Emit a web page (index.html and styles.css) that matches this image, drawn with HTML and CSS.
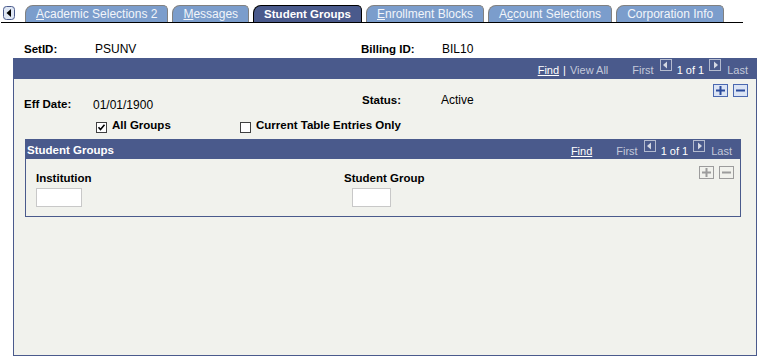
FILE: index.html
```html
<!DOCTYPE html>
<html lang="en">
  <head>
    <meta charset="UTF-8" />
    <title>Student Groups</title>
    <link rel="stylesheet" href="styles.css">
  </head>
  <body>
    <div class="tabs">
      <span class="tab-scroll">
        <svg width="12" height="14" viewBox="0 0 12 14">
          <rect x="0.5" y="0.5" width="11" height="13" rx="3" fill="#dfe7f4" stroke="#4a5a8c" />
          <polygon points="3.5,7 8,3 8,11" fill="#000" />
        </svg>
      </span>
      <a class="tab"><u>A</u>cademic Selections 2</a>
      <a class="tab"><u>M</u>essages</a>
      <a class="tab active">Student Groups</a>
      <a class="tab"><u>E</u>nrollment Blocks</a>
      <a class="tab">A<u>c</u>count Selections</a>
      <a class="tab">Corporation Info</a>
    </div>

    <div class="keys">
      <span class="label">SetID:</span>
      <span>PSUNV</span>
      <span class="label">Billing ID:</span>
      <span>BIL10</span>
    </div>

    <div class="scroll">
      <div class="bar">
        <a class="txt">Find</a>
        <span class="txt sep">|</span>
        <span class="txt">View All</span>
        <span class="txt gap">First</span>
        <svg class="arrow prev" width="12" height="12" viewBox="0 0 12 12">
          <rect x="0.5" y="0.5" width="11" height="11" fill="none" stroke="#b4bbcf" />
          <polygon points="3,6 7,2.5 7,9.5" fill="#d4d8e3" />
        </svg>
        <span class="txt count">1 of 1</span>
        <svg class="arrow next" width="12" height="12" viewBox="0 0 12 12">
          <rect x="0.5" y="0.5" width="11" height="11" fill="none" stroke="#b4bbcf" />
          <polygon points="9,6 5,2.5 5,9.5" fill="#d4d8e3" />
        </svg>
        <span class="txt">Last</span>
      </div>

      <div class="tools">
        <svg width="15" height="13" viewBox="0 0 15 13">
          <rect x="0.5" y="0.5" width="14" height="12" fill="#dbe4f4" stroke="#4a68b0" />
          <rect x="3" y="5.5" width="9" height="2" fill="#2a4b9c" />
          <rect x="6.5" y="2" width="2" height="9" fill="#2a4b9c" />
        </svg>
        <svg width="15" height="13" viewBox="0 0 15 13">
          <rect x="0.5" y="0.5" width="14" height="12" fill="#dbe4f4" stroke="#4a68b0" />
          <rect x="3" y="5.5" width="9" height="2" fill="#2a4b9c" />
        </svg>
      </div>

      <div class="fields">
        <span class="label low">Eff Date:</span>
        <span class="lower">01/01/1900</span>
        <span class="label">Status:</span>
        <span>Active</span>
      </div>

      <div class="checks">
        <label class="check first">
          <svg width="11" height="11" viewBox="0 0 11 11">
            <rect x="0.5" y="0.5" width="10" height="10" fill="#fff" stroke="#404040" />
            <path d="M2.5 5.2 L4.5 7.5 L8.5 2.8" fill="none" stroke="#000" stroke-width="1.6" />
          </svg>
          All Groups
        </label>
        <label class="check">
          <svg width="11" height="11" viewBox="0 0 11 11">
            <rect x="0.5" y="0.5" width="10" height="10" fill="#fff" stroke="#404040" />
          </svg>
          Current Table Entries Only
        </label>
      </div>

      <div class="grid">
        <div class="bar">
          <span class="grid-title">Student Groups</span>
          <span class="nav">
            <a class="txt">Find</a>
            <span class="txt gap">First</span>
            <svg class="arrow prev" width="12" height="12" viewBox="0 0 12 12">
              <rect x="0.5" y="0.5" width="11" height="11" fill="none" stroke="#b4bbcf" />
              <polygon points="3,6 7,2.5 7,9.5" fill="#d4d8e3" />
            </svg>
            <span class="txt count">1 of 1</span>
            <svg class="arrow next" width="12" height="12" viewBox="0 0 12 12">
              <rect x="0.5" y="0.5" width="11" height="11" fill="none" stroke="#b4bbcf" />
              <polygon points="9,6 5,2.5 5,9.5" fill="#d4d8e3" />
            </svg>
            <span class="txt">Last</span>
          </span>
        </div>

        <div class="tools small">
          <svg width="15" height="13" viewBox="0 0 15 13">
            <rect x="0.5" y="0.5" width="14" height="12" fill="#f1f2ed" stroke="#9c9c9c" />
            <rect x="3" y="5.5" width="9" height="2" fill="#9c9c9c" />
            <rect x="6.5" y="2" width="2" height="9" fill="#9c9c9c" />
          </svg>
          <svg width="15" height="13" viewBox="0 0 15 13">
            <rect x="0.5" y="0.5" width="14" height="12" fill="#f1f2ed" stroke="#9c9c9c" />
            <rect x="3" y="5.5" width="9" height="2" fill="#9c9c9c" />
          </svg>
        </div>

        <div class="grid-cols">
          <span class="label">Institution</span>
          <span class="label">Student Group</span>
          <span class="input inst"></span>
          <span class="input group"></span>
        </div>
      </div>
    </div>
  </body>
</html>
```

FILE: styles.css
```css
body {
  margin: 0;
  background: #fff;
  font-family: "Liberation Sans", Arial, sans-serif;
  font-size: 12px;
  color: #000;
}

/* tab strip */
.tabs {
  display: flex;
  align-items: flex-end;
  width: 742px;
  height: 17px;
  margin: 5px 0 0 1px;
  border-bottom: 1px solid #000;
}

.tab-scroll {
  align-self: flex-start;
  height: 14px;
  margin: 1px 10px 0 2px;
}

.tab-scroll svg {
  display: block;
}

.tab {
  height: 16px;
  margin-right: 4px;
  padding: 0 10px;
  border: 1px solid #808080;
  border-bottom: 0;
  border-radius: 8px 5px 0 0;
  background: #7b9dcc;
  color: #f2f5fa;
  line-height: 16px;
  white-space: nowrap;
}

.tab u {
  text-decoration: underline;
}

.tab.active {
  border-color: #000;
  background: #4a5a8c;
  color: #fff;
  font-size: 11.5px;
  font-weight: bold;
}

/* key fields */
.label {
  font-size: 11.5px;
  font-weight: bold;
}

.keys {
  display: grid;
  grid-template-columns: 71px 266px 81px auto;
  margin: 19px 0 2px;
  padding-left: 24px;
  line-height: 14px;
}

/* scroll area */
.scroll {
  box-sizing: border-box;
  width: 744px;
  height: 298px;
  margin-left: 13px;
  border: 1px solid #4a5a8c;
  background: #f1f2ed;
}

.bar {
  display: flex;
  align-items: flex-start;
  justify-content: flex-end;
  height: 20px;
  padding-right: 8px;
  background: #4a5a8c;
  color: #c3c9da;
  font-size: 11px;
  line-height: 13px;
}

.bar .txt {
  padding-top: 5px;
}

.bar a {
  color: #fff;
  text-decoration: underline;
}

.bar .sep {
  margin: 0 4px;
  color: #fff;
}

.bar .gap {
  margin-left: 24px;
}

.bar .arrow {
  display: block;
}

.bar .prev {
  margin-left: 6px;
}

.bar .next {
  margin-right: 6px;
}

.bar .count {
  margin: 0 5px;
  color: #fff;
}

.tools {
  display: flex;
  justify-content: flex-end;
  gap: 5px;
  height: 13px;
  margin: 5px 8px 0 0;
}

.tools svg {
  display: block;
}

.fields {
  display: grid;
  grid-template-columns: 69px 269px 79px auto;
  margin-top: -4px;
  padding-left: 10px;
  line-height: 14px;
}

.fields .low {
  padding-top: 4px;
}

.fields .lower {
  padding-top: 5px;
}

.checks {
  display: flex;
  margin-top: 7px;
  padding-left: 82px;
  font-size: 11.5px;
  font-weight: bold;
  line-height: 13px;
}

.check {
  display: flex;
  align-items: flex-start;
  gap: 5px;
}

.check.first {
  width: 144px;
}

.check svg {
  margin-top: 3px;
}

/* student groups grid */
.grid {
  box-sizing: border-box;
  width: 716px;
  margin: 6px 0 0 11px;
  border: 1px solid #4a5a8c;
}

.grid .bar {
  justify-content: space-between;
  height: 19px;
  padding-left: 1px;
}

.grid-title {
  padding-top: 3px;
  color: #fff;
  font-size: 11.5px;
  font-weight: bold;
  line-height: 14px;
}

.nav {
  display: flex;
  align-items: flex-start;
}

.tools.small {
  margin: 7px 6px 0 0;
}

.grid-cols {
  display: grid;
  grid-template-columns: 308px auto;
  margin-top: -8px;
  padding: 0 0 9px 10px;
  line-height: 14px;
}

.input {
  box-sizing: border-box;
  height: 19px;
  margin-top: 3px;
  border: 1px solid #c8c8c8;
  background: #fff;
}

.input.inst {
  width: 46px;
}

.input.group {
  width: 39px;
  margin-left: 8px;
}
```
